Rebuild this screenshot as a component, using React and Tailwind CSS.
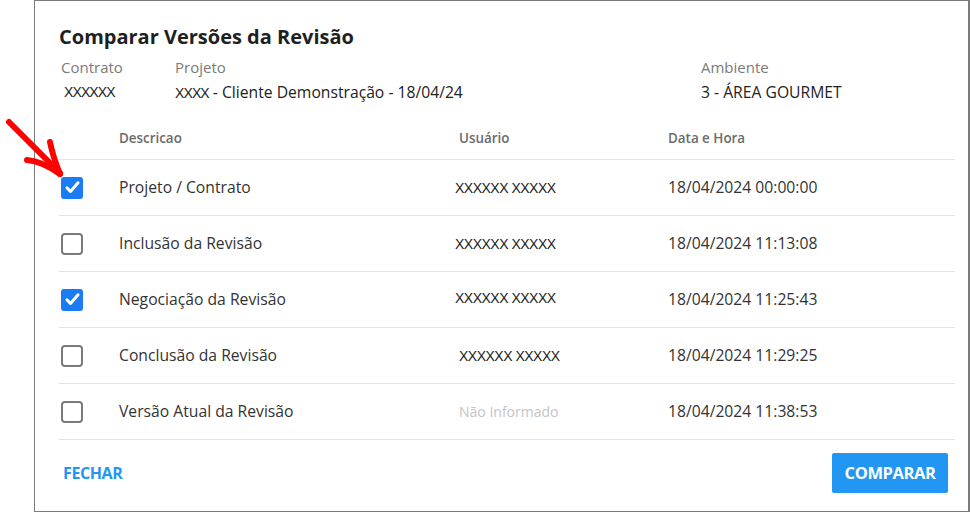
import React from "react";

const rows = [
  { id: 0, desc: "Projeto / Contrato", user: "XXXXXX XXXXX", userPad: "pl-0", date: "18/04/2024 00:00:00", checked: true },
  { id: 1, desc: "Inclusão da Revisão", user: "XXXXXX XXXXX", userPad: "pl-0", date: "18/04/2024 11:13:08", checked: false },
  { id: 2, desc: "Negociação da Revisão", user: "XXXXXX XXXXX", userPad: "pl-0 -mt-1", date: "18/04/2024 11:25:43", checked: true },
  { id: 3, desc: "Conclusão da Revisão", user: "XXXXXX XXXXX", userPad: "pl-[4px]", date: "18/04/2024 11:29:25", checked: false },
  { id: 4, desc: "Versão Atual da Revisão", user: null, userPad: "pl-[4px]", date: "18/04/2024 11:38:53", checked: false },
];

function Check({ checked }) {
  if (checked) {
    return (
      <div className="w-[22px] h-[22px] rounded-[3px] bg-[#1a7cf5] flex items-center justify-center">
        <svg viewBox="0 0 24 24" className="w-[19px] h-[19px]" fill="none" stroke="white" strokeWidth="3.8" strokeLinecap="round" strokeLinejoin="round">
          <path d="M5 12.5l4.5 4.5L19 6" />
        </svg>
      </div>
    );
  }
  return <div className="w-[22px] h-[22px] rounded-[4px] border-2 border-[#7a7a7a] bg-white" />;
}

export default function App() {
  return (
    <div className="relative w-[970px] h-[512px] bg-white overflow-hidden" style={{ fontFamily: '"Open Sans", "Noto Sans", sans-serif' }}>
      <div className="ml-[34px] w-[936px] h-[512px] border border-[#7b7b7b] border-r-2 pl-6 pr-[12px] flex flex-col">
        <h1 className="pt-[22px] text-[20px] leading-[28px] font-bold text-[#1f1f1f]">Comparar Versões da Revisão</h1>

        <div className="flex mt-[5px] text-[15.7px]">
          <div className="w-[116px] pl-[2px]">
            <div className="text-[15px] text-[#7a7a7a] leading-[22px]">Contrato</div>
            <div className="mt-[3px] pl-[3px] leading-[22px] text-[14px] tracking-[-0.9px] text-[#222]" style={{ fontFamily: '"Liberation Sans", Arial, sans-serif' }}>XXXXXX</div>
          </div>
          <div className="w-[526px]">
            <div className="text-[15px] text-[#7a7a7a] leading-[22px]">Projeto</div>
            <div className="mt-[3px] leading-[22px] text-[#222]">
              <span className="text-[14px] tracking-[-0.9px]" style={{ fontFamily: '"Liberation Sans", Arial, sans-serif' }}>XXXX</span>
              <span> - Cliente Demonstração - 18/04/24</span>
            </div>
          </div>
          <div>
            <div className="text-[15px] text-[#7a7a7a] leading-[22px]">Ambiente</div>
            <div className="mt-[3px] leading-[22px] text-[#222]">3 - ÁREA GOURMET</div>
          </div>
        </div>

        <div className="mt-[12px] w-[896px]">
          <div className="flex items-center h-[44px] pt-[1px] border-b border-[#e3e3e3] text-[13.4px] font-semibold text-[#6b6b6b]">
            <div className="w-[60px]" />
            <div className="w-[336px]">Descricao</div>
            <div className="w-[213px] pl-[4px]">Usuário</div>
            <div>Data e Hora</div>
          </div>
          {rows.map((r) => (
            <div key={r.id} className="flex items-center h-[56px] border-b border-[#e3e3e3] text-[15.7px] text-[#333]">
              <div className="w-[60px] pl-[2px]">
                <Check checked={r.checked} />
              </div>
              <div className="w-[336px]">{r.desc}</div>
              <div className={`w-[213px] ${r.userPad}`}>
                {r.user ? (
                  <span className="text-[14px] tracking-[-0.5px] text-[#222]" style={{ fontFamily: '"Liberation Sans", Arial, sans-serif' }}>{r.user}</span>
                ) : (
                  <span className="text-[14px] text-[#c4c4c4]">Não Informado</span>
                )}
              </div>
              <div>{r.date}</div>
            </div>
          ))}
        </div>

        <div className="flex items-center justify-between w-[889px] mt-[13px]">
          <button className="pl-[4px] text-[16px] font-bold text-[#2196f3] tracking-tight">FECHAR</button>
          <button className="w-[116px] h-[40px] rounded-[2px] bg-[#2196f3] text-white text-[16.5px] font-bold tracking-tight">COMPARAR</button>
        </div>
      </div>

      <svg className="absolute left-0 top-[110px]" width="70" height="75" viewBox="0 0 70 75" fill="none" stroke="#ff0000" strokeWidth="6" strokeLinecap="round" strokeLinejoin="round">
        <path d="M9 12 C 25 28, 42 45, 60 63" />
        <path d="M50 32 C 52 42, 55 52, 60 64" />
        <path d="M27 50 C 38 51, 49 56, 60 64" />
      </svg>
    </div>
  );
}
